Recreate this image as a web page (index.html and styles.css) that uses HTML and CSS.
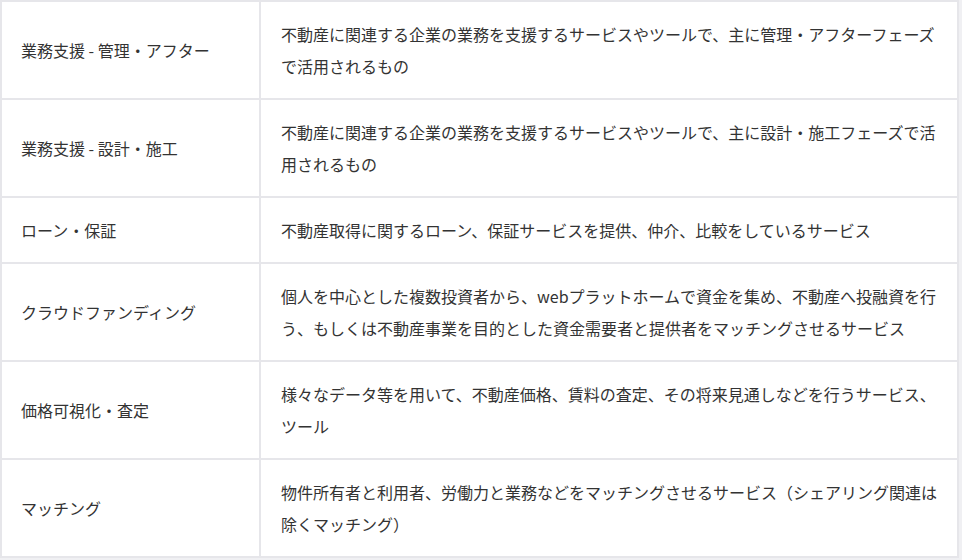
FILE: index.html
```html
<!DOCTYPE html>
<html lang="ja">
<head>
<meta charset="utf-8">
<link rel="stylesheet" href="styles.css">
</head>
<body>
<div class="table">
  <div class="cell head">業務支援 - 管理・アフター</div>
  <div class="cell desc">不動産に関連する企業の業務を支援するサービスやツールで、主に管理・アフターフェーズで活用されるもの</div>
  <div class="cell head">業務支援 - 設計・施工</div>
  <div class="cell desc">不動産に関連する企業の業務を支援するサービスやツールで、主に設計・施工フェーズで活用されるもの</div>
  <div class="cell head">ローン・保証</div>
  <div class="cell desc">不動産取得に関するローン、保証サービスを提供、仲介、比較をしているサービス</div>
  <div class="cell head">クラウドファンディング</div>
  <div class="cell desc">個人を中心とした複数投資者から、webプラットホームで資金を集め、不動産へ投融資を行う、もしくは不動産事業を目的とした資金需要者と提供者をマッチングさせるサービス</div>
  <div class="cell head">価格可視化・査定</div>
  <div class="cell desc">様々なデータ等を用いて、不動産価格、賃料の査定、その将来見通しなどを行うサービス、ツール</div>
  <div class="cell head">マッチング</div>
  <div class="cell desc">物件所有者と利用者、労働力と業務などをマッチングさせるサービス（シェアリング関連は除くマッチング）</div>
</div>
</body>
</html>
```
FILE: styles.css
```css
html, body {
  margin: 0;
  padding: 0;
  background: #f0f0f3;
}
body {
  font-family: "Noto Sans CJK JP", "Noto Sans", sans-serif;
  font-size: 16px;
  color: #333333;
}
.table {
  display: grid;
  grid-template-columns: 257px 696px;
  gap: 2px;
  padding: 2px;
  background: #e6e6ea;
  width: max-content;
}
.cell {
  background: #ffffff;
  padding: 16px 20px;
  line-height: 32px;
  display: flex;
  align-items: center;
}
.head {
  padding-left: 19px;
}
```
